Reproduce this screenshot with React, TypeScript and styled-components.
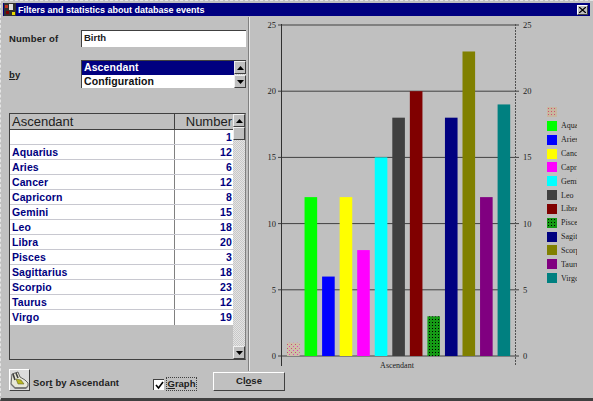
import React from "react";
import styled, { createGlobalStyle } from "styled-components";

const GlobalStyle = createGlobalStyle`
  html, body {
    margin: 0;
    padding: 0;
    background: #c0c0c0;
  }
`;

const Window = styled.div`
  box-sizing: border-box;
  width: 593px;
  height: 401px;
  padding: 2px 3px 0 2px;
  display: flex;
  flex-direction: column;
  background: #c0c0c0;
  border-top: 1px dashed #e4e4e4;
  border-left: 1px dashed #e4e4e4;
  border-bottom: 3px solid #404040;
  font-family: "Liberation Sans", Arial, sans-serif;
  overflow: hidden;
`;

const TitleBar = styled.div`
  height: 13px;
  flex: none;
  display: flex;
  align-items: center;
  background: #000080;
  color: #fff;
  font-size: 9px;
  font-weight: bold;
  padding: 0 2px 0 1px;
`;

const TitleText = styled.span`
  margin-left: 2px;
  flex: 1;
`;

const CloseBox = styled.div`
  width: 11px;
  height: 10px;
  background: #c0c0c0;
  display: flex;
  align-items: center;
  justify-content: center;
  border: 1px solid;
  border-color: #fff #404040 #404040 #fff;
  box-sizing: border-box;
`;

const Main = styled.div`
  height: 354px;
  flex: none;
  margin-left: -3px;
  margin-right: -3px;
  margin-top: 1px;
  display: flex;
`;

const LeftPane = styled.div`
  width: 248px;
  flex: none;
  box-sizing: border-box;
  padding: 13px 2px 0 9px;
  display: flex;
  flex-direction: column;
`;

const Divider = styled.div`
  width: 1px;
  flex: none;
  background: #808080;
  border-right: 1px solid #e8e8e8;
`;

const FieldRow = styled.div<{ $gap?: number; $h: number }>`
  display: flex;
  align-items: center;
  height: ${(p) => p.$h}px;
  margin-top: ${(p) => p.$gap ?? 0}px;
`;

const FieldLabel = styled.div`
  width: 72px;
  flex: none;
  font-size: 9.5px;
  font-weight: bold;
  color: #202020;
  letter-spacing: 0.2px;
`;

const Input = styled.div`
  box-sizing: border-box;
  width: 165px;
  height: 17px;
  background: #fff;
  border-top: 1px solid #404040;
  border-left: 1px solid #404040;
  padding-left: 2px;
  font-size: 9.5px;
  font-weight: bold;
  line-height: 14px;
  color: #202020;
`;

const ListBox = styled.div`
  box-sizing: border-box;
  width: 165px;
  height: 28px;
  display: flex;
  background: #fff;
  border-top: 1px solid #404040;
  border-left: 1px solid #404040;
`;

const ListItems = styled.div`
  flex: 1;
`;

const ListItem = styled.div<{ $selected?: boolean }>`
  height: 14px;
  padding-left: 2px;
  line-height: 13px;
  font-size: 10.5px;
  font-weight: bold;
  letter-spacing: 0.1px;
  color: ${(p) => (p.$selected ? "#fff" : "#101010")};
  background: ${(p) => (p.$selected ? "#000080" : "transparent")};
`;

const ScrollBar = styled.div`
  width: 12px;
  flex: none;
  display: flex;
  flex-direction: column;
  justify-content: space-between;
  background: repeating-conic-gradient(#c8c8c8 0 25%, #e4e4e4 0 50%) 0 0 / 2px 2px;
`;

const ArrowButton = styled.div`
  box-sizing: border-box;
  width: 12px;
  height: 13px;
  background: #c0c0c0;
  display: flex;
  align-items: center;
  justify-content: center;
  border: 1px solid;
  border-color: #f0f0f0 #404040 #404040 #f0f0f0;
`;

const ScrollTop = styled.div`
  display: flex;
  flex-direction: column;
`;

const Table = styled.div`
  box-sizing: border-box;
  width: 237px;
  height: 247px;
  margin-top: 25px;
  display: flex;
  border: 1px solid #404040;
  border-right-color: #808080;
  background: #c0c0c0;
`;

const TableBody = styled.div`
  flex: 1;
`;

const HeaderRow = styled.div`
  height: 15px;
  display: grid;
  grid-template-columns: 164px 1fr;
  border-bottom: 1px solid #404040;
  font-size: 13px;
  line-height: 15px;
  color: #202020;
`;

const HeaderCell = styled.div<{ $right?: boolean }>`
  padding: 0 1px 0 2px;
  text-align: ${(p) => (p.$right ? "right" : "left")};
  border-left: ${(p) => (p.$right ? "1px solid #404040" : "0")};
  overflow: hidden;
  white-space: nowrap;
`;

const Row = styled.div`
  box-sizing: border-box;
  height: 15px;
  display: grid;
  grid-template-columns: 164px 1fr;
  background: #fff;
  border-bottom: 1px solid #c8c8d0;
  font-size: 10.5px;
  font-weight: bold;
  letter-spacing: 0.1px;
  line-height: 14px;
  color: #000080;

  &:last-child {
    border-bottom: 0;
  }
`;

const Cell = styled.div<{ $right?: boolean }>`
  padding: 0 1px 0 2px;
  text-align: ${(p) => (p.$right ? "right" : "left")};
  border-left: ${(p) => (p.$right ? "1px solid #808080" : "0")};
`;

const ChartPane = styled.div`
  flex: 1;
  display: flex;
  min-width: 0;
`;

const ChartSvg = styled.svg`
  width: 296px;
  height: 354px;
  flex: none;
  display: block;
`;

const AxisText = styled.text`
  font-family: "Liberation Serif", "Times New Roman", serif;
  font-size: 8.5px;
  fill: #202020;
`;

const AxisTitle = styled(AxisText)`
  font-size: 8px;
`;

const Legend = styled.div`
  width: 32px;
  flex: none;
  padding: 90px 0 0 1px;
  display: flex;
  flex-direction: column;
  gap: 3.85px;
  font-family: "Liberation Serif", "Times New Roman", serif;
  font-size: 8px;
  color: #202020;
`;

const LegendRow = styled.div`
  height: 10px;
  display: flex;
  align-items: center;
  gap: 4px;
`;

const Swatch = styled.div<{ $color: string; $kind?: string }>`
  width: 10px;
  height: 10px;
  flex: none;
  background-color: ${(p) => p.$color};
  background-image: ${(p) =>
    p.$kind === "hatch"
      ? "radial-gradient(#d05070 0.7px, transparent 1px)"
      : p.$kind === "dots"
        ? "radial-gradient(#000 0.6px, transparent 0.8px)"
        : "none"};
  background-size: 3px 3px;
`;

const LegendLabel = styled.span`
  width: 16px;
  overflow: hidden;
  white-space: nowrap;
`;

const Footer = styled.div`
  flex: 1;
  display: flex;
  align-items: flex-start;
  margin-left: 6px;
`;

const IconButton = styled.div`
  box-sizing: border-box;
  width: 21px;
  height: 22px;
  margin-top: -2px;
  background: #dcdcdc;
  border: 1px solid;
  border-color: #fff #404040 #404040 #fff;
  display: flex;
  align-items: center;
  justify-content: center;
`;

const SortLabel = styled.div`
  margin: 6px 0 0 3px;
  width: 120px;
  font-size: 9.5px;
  font-weight: bold;
  color: #202020;
  letter-spacing: 0.15px;
`;

const CheckBox = styled.div`
  box-sizing: border-box;
  width: 11px;
  height: 11px;
  margin-top: 8px;
  background: #fff;
  border-top: 1px solid #404040;
  border-left: 1px solid #404040;
  display: flex;
  align-items: center;
  justify-content: center;
`;

const GraphLabel = styled.div`
  box-sizing: border-box;
  height: 14px;
  width: 31px;
  margin: 6px 0 0 2px;
  outline: 1px dotted #404040;
  outline-offset: -1px;
  font-size: 9.5px;
  font-weight: bold;
  line-height: 14px;
  text-align: center;
  color: #202020;
`;

const CloseButton = styled.div`
  box-sizing: border-box;
  width: 72px;
  height: 19px;
  margin: 1px 0 0 16px;
  background: #c0c0c0;
  border: 1px solid;
  border-color: #fff #404040 #404040 #fff;
  font-size: 9.5px;
  font-weight: bold;
  line-height: 16px;
  text-align: center;
  color: #202020;
`;

const Mnemonic = styled.span`
  text-decoration: underline;
`;

type Sign = { name: string; count: number; color: string; kind?: string };

const signs: Sign[] = [
  { name: "", count: 1, color: "#c8b8a0", kind: "hatch" },
  { name: "Aquarius", count: 12, color: "#00ff00" },
  { name: "Aries", count: 6, color: "#0000ff" },
  { name: "Cancer", count: 12, color: "#ffff00" },
  { name: "Capricorn", count: 8, color: "#ff00ff" },
  { name: "Gemini", count: 15, color: "#00ffff" },
  { name: "Leo", count: 18, color: "#404040" },
  { name: "Libra", count: 20, color: "#800000" },
  { name: "Pisces", count: 3, color: "#159a15", kind: "dots" },
  { name: "Sagittarius", count: 18, color: "#000080" },
  { name: "Scorpio", count: 23, color: "#808000" },
  { name: "Taurus", count: 12, color: "#800080" },
  { name: "Virgo", count: 19, color: "#008080" },
];

const ticks = [0, 5, 10, 15, 20, 25];
const zeroY = 356;
const unit = 13.24;

const barFill = (s: Sign) => (s.kind === "hatch" ? "url(#hatch)" : s.kind === "dots" ? "url(#dots)" : s.color);

const Arrow = ({ down }: { down?: boolean }) => (
  <svg width="7" height="4" viewBox="0 0 7 4">
    <path d={down ? "M0 0h7L3.5 4z" : "M0 4h7L3.5 0z"} fill="#000" />
  </svg>
);

const Chart = () => (
  <ChartSvg viewBox="251 17 296 354">
    <defs>
      <pattern id="hatch" width="4" height="4" patternUnits="userSpaceOnUse">
        <rect width="4" height="4" fill="#cdbfa8" />
        <rect x="0" y="0" width="1" height="1" fill="#c85070" />
        <rect x="2" y="2" width="1" height="1" fill="#e040c0" />
      </pattern>
      <pattern id="dots" width="3" height="3" patternUnits="userSpaceOnUse">
        <rect width="3" height="3" fill="#159a15" />
        <rect x="1" y="1" width="1" height="1" fill="#000" />
      </pattern>
    </defs>
    {ticks.map((t) => {
      const y = zeroY - t * unit;
      return (
        <g key={t}>
          <line x1="279" x2="520" y1={y} y2={y} stroke="#404040" />
          <AxisText x="277" y={y + 3} textAnchor="end">{t}</AxisText>
          <AxisText x="524" y={y + 3}>{t}</AxisText>
        </g>
      );
    })}
    <line x1="282.5" x2="282.5" y1="24" y2="366" stroke="#303030" />
    <line x1="516.5" x2="516.5" y1="24" y2="366" stroke="#505050" strokeDasharray="2 1" />
    {signs.map((s, i) => {
      const h = s.count * unit;
      return <rect key={s.name} x={288 + i * 17.55} y={zeroY - h} width="12.6" height={h} fill={barFill(s)} />;
    })}
    <AxisTitle x="398" y="368" textAnchor="middle">Ascendant</AxisTitle>
  </ChartSvg>
);

const Shoe = () => (
  <svg width="19" height="20" viewBox="0 0 19 20">
    <path d="M2 4l6-2 2 5 5 3 3 3v3l-2 2H5l-4-4z" fill="#e8e8d8" stroke="#404040" strokeWidth="0.8" />
    <path d="M3 4l2 6M6 3l2 5" stroke="#404040" strokeWidth="1.6" />
    <path d="M6 9l5 1 3 4-6 0z" fill="#b8b820" stroke="#505020" strokeWidth="0.5" />
    <path d="M1 14l4 4h11l2-2" fill="none" stroke="#707070" strokeWidth="1.3" />
  </svg>
);

export default function App() {
  return (
    <>
      <GlobalStyle />
      <Window>
        <TitleBar>
          <svg width="12" height="13" viewBox="0 0 12 13">
            <rect width="12" height="13" fill="#303030" />
            <rect x="1" y="2" width="3" height="3" fill="#c03020" />
            <rect x="5" y="1" width="4" height="6" fill="#e0e0e0" />
            <rect x="8" y="9" width="3" height="3" fill="#e8d800" />
            <rect x="2" y="8" width="3" height="3" fill="#800000" />
          </svg>
          <TitleText>Filters and statistics about database events</TitleText>
          <CloseBox>
            <svg width="7" height="6" viewBox="0 0 7 6">
              <path d="M0 0l7 6M7 0L0 6" stroke="#000" strokeWidth="1.3" />
            </svg>
          </CloseBox>
        </TitleBar>
        <Main>
          <LeftPane>
            <FieldRow $h={17}>
              <FieldLabel>Number of</FieldLabel>
              <Input>Birth</Input>
            </FieldRow>
            <FieldRow $gap={13} $h={28}>
              <FieldLabel><Mnemonic>b</Mnemonic>y</FieldLabel>
              <ListBox>
                <ListItems>
                  <ListItem $selected>Ascendant</ListItem>
                  <ListItem>Configuration</ListItem>
                </ListItems>
                <ScrollBar>
                  <ArrowButton><Arrow /></ArrowButton>
                  <ArrowButton><Arrow down /></ArrowButton>
                </ScrollBar>
              </ListBox>
            </FieldRow>
            <Table>
              <TableBody>
                <HeaderRow>
                  <HeaderCell>Ascendant</HeaderCell>
                  <HeaderCell $right>Number</HeaderCell>
                </HeaderRow>
                {signs.map((s) => (
                  <Row key={s.name}>
                    <Cell>{s.name}</Cell>
                    <Cell $right>{s.count}</Cell>
                  </Row>
                ))}
              </TableBody>
              <ScrollBar>
                <ScrollTop>
                  <ArrowButton><Arrow /></ArrowButton>
                  <ArrowButton />
                </ScrollTop>
                <ArrowButton><Arrow down /></ArrowButton>
              </ScrollBar>
            </Table>
          </LeftPane>
          <Divider />
          <ChartPane>
            <Chart />
            <Legend>
              {signs.map((s) => (
                <LegendRow key={s.name}>
                  <Swatch $color={s.color} $kind={s.kind} />
                  <LegendLabel>{s.name}</LegendLabel>
                </LegendRow>
              ))}
            </Legend>
          </ChartPane>
        </Main>
        <Footer>
          <IconButton><Shoe /></IconButton>
          <SortLabel>Sor<Mnemonic>t</Mnemonic> by Ascendant</SortLabel>
          <CheckBox>
            <svg width="9" height="9" viewBox="0 0 9 9">
              <path d="M1 4l2.5 3L8 1" fill="none" stroke="#000" strokeWidth="1.6" />
            </svg>
          </CheckBox>
          <GraphLabel><Mnemonic>G</Mnemonic>raph</GraphLabel>
          <CloseButton>Cl<Mnemonic>o</Mnemonic>se</CloseButton>
        </Footer>
      </Window>
    </>
  );
}
